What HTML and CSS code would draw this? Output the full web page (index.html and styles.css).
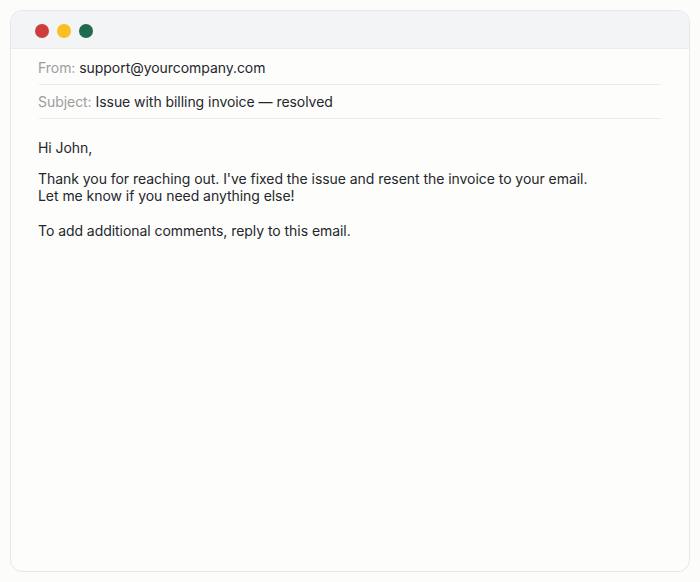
FILE: index.html
```html
<!DOCTYPE html>
<html lang="en">
<head>
<meta charset="UTF-8" />
<title>Email</title>
<link rel="stylesheet" href="styles.css">
</head>
<body>
  <div class="window">
    <div class="titlebar">
      <span class="dot red"></span>
      <span class="dot yellow"></span>
      <span class="dot green"></span>
    </div>
    <div class="mail">
      <div class="field"><span class="label">From:</span> support@yourcompany.com</div>
      <div class="field"><span class="label">Subject:</span> Issue with billing invoice — resolved</div>
      <div class="body">
        <p class="greeting">Hi John,</p>
        <p>Thank you for reaching out. I've fixed the issue and resent the invoice to your email.<br>Let me know if you need anything else!</p>
        <p>To add additional comments, reply to this email.</p>
      </div>
    </div>
  </div>
</body>
</html>
```

FILE: styles.css
```css
body {
  margin: 0;
  padding: 10px;
  background: #fcfcfb;
  font-family: Inter, "Noto Sans", sans-serif;
  font-size: 14px;
  letter-spacing: -0.05px;
  color: #24272b;
}
.window {
  height: 562px;
  box-sizing: border-box;
  border: 1px solid #e6e7e8;
  border-radius: 12px;
  background: #fdfdfc;
  overflow: hidden;
}
.titlebar {
  height: 38px;
  background: #f3f4f5;
  border-bottom: 1px solid #ebecee;
  display: flex;
  align-items: center;
  gap: 8px;
  padding: 3px 0 0 24px;
  box-sizing: border-box;
}
.dot {
  width: 14px;
  height: 14px;
  border-radius: 50%;
}
.red { background: #cc3d3b; }
.yellow { background: #fbbf24; }
.green { background: #1e6b50; }
.mail {
  padding: 2px 28px 0 28px;
}
.field {
  padding: 9px 0 8px;
  border-bottom: 1px solid #ececec;
  line-height: 16px;
}
.label {
  color: #9c9c9c;
}
.field .label,
.body {
  margin-left: -1px;
}
.field .label {
  display: inline-block;
}
.body {
  padding-top: 4px;
  line-height: 16.5px;
}
.body p {
  margin: 0 0 18.5px;
}
.body .greeting {
  margin: 17px 0 14.5px;
}
```
